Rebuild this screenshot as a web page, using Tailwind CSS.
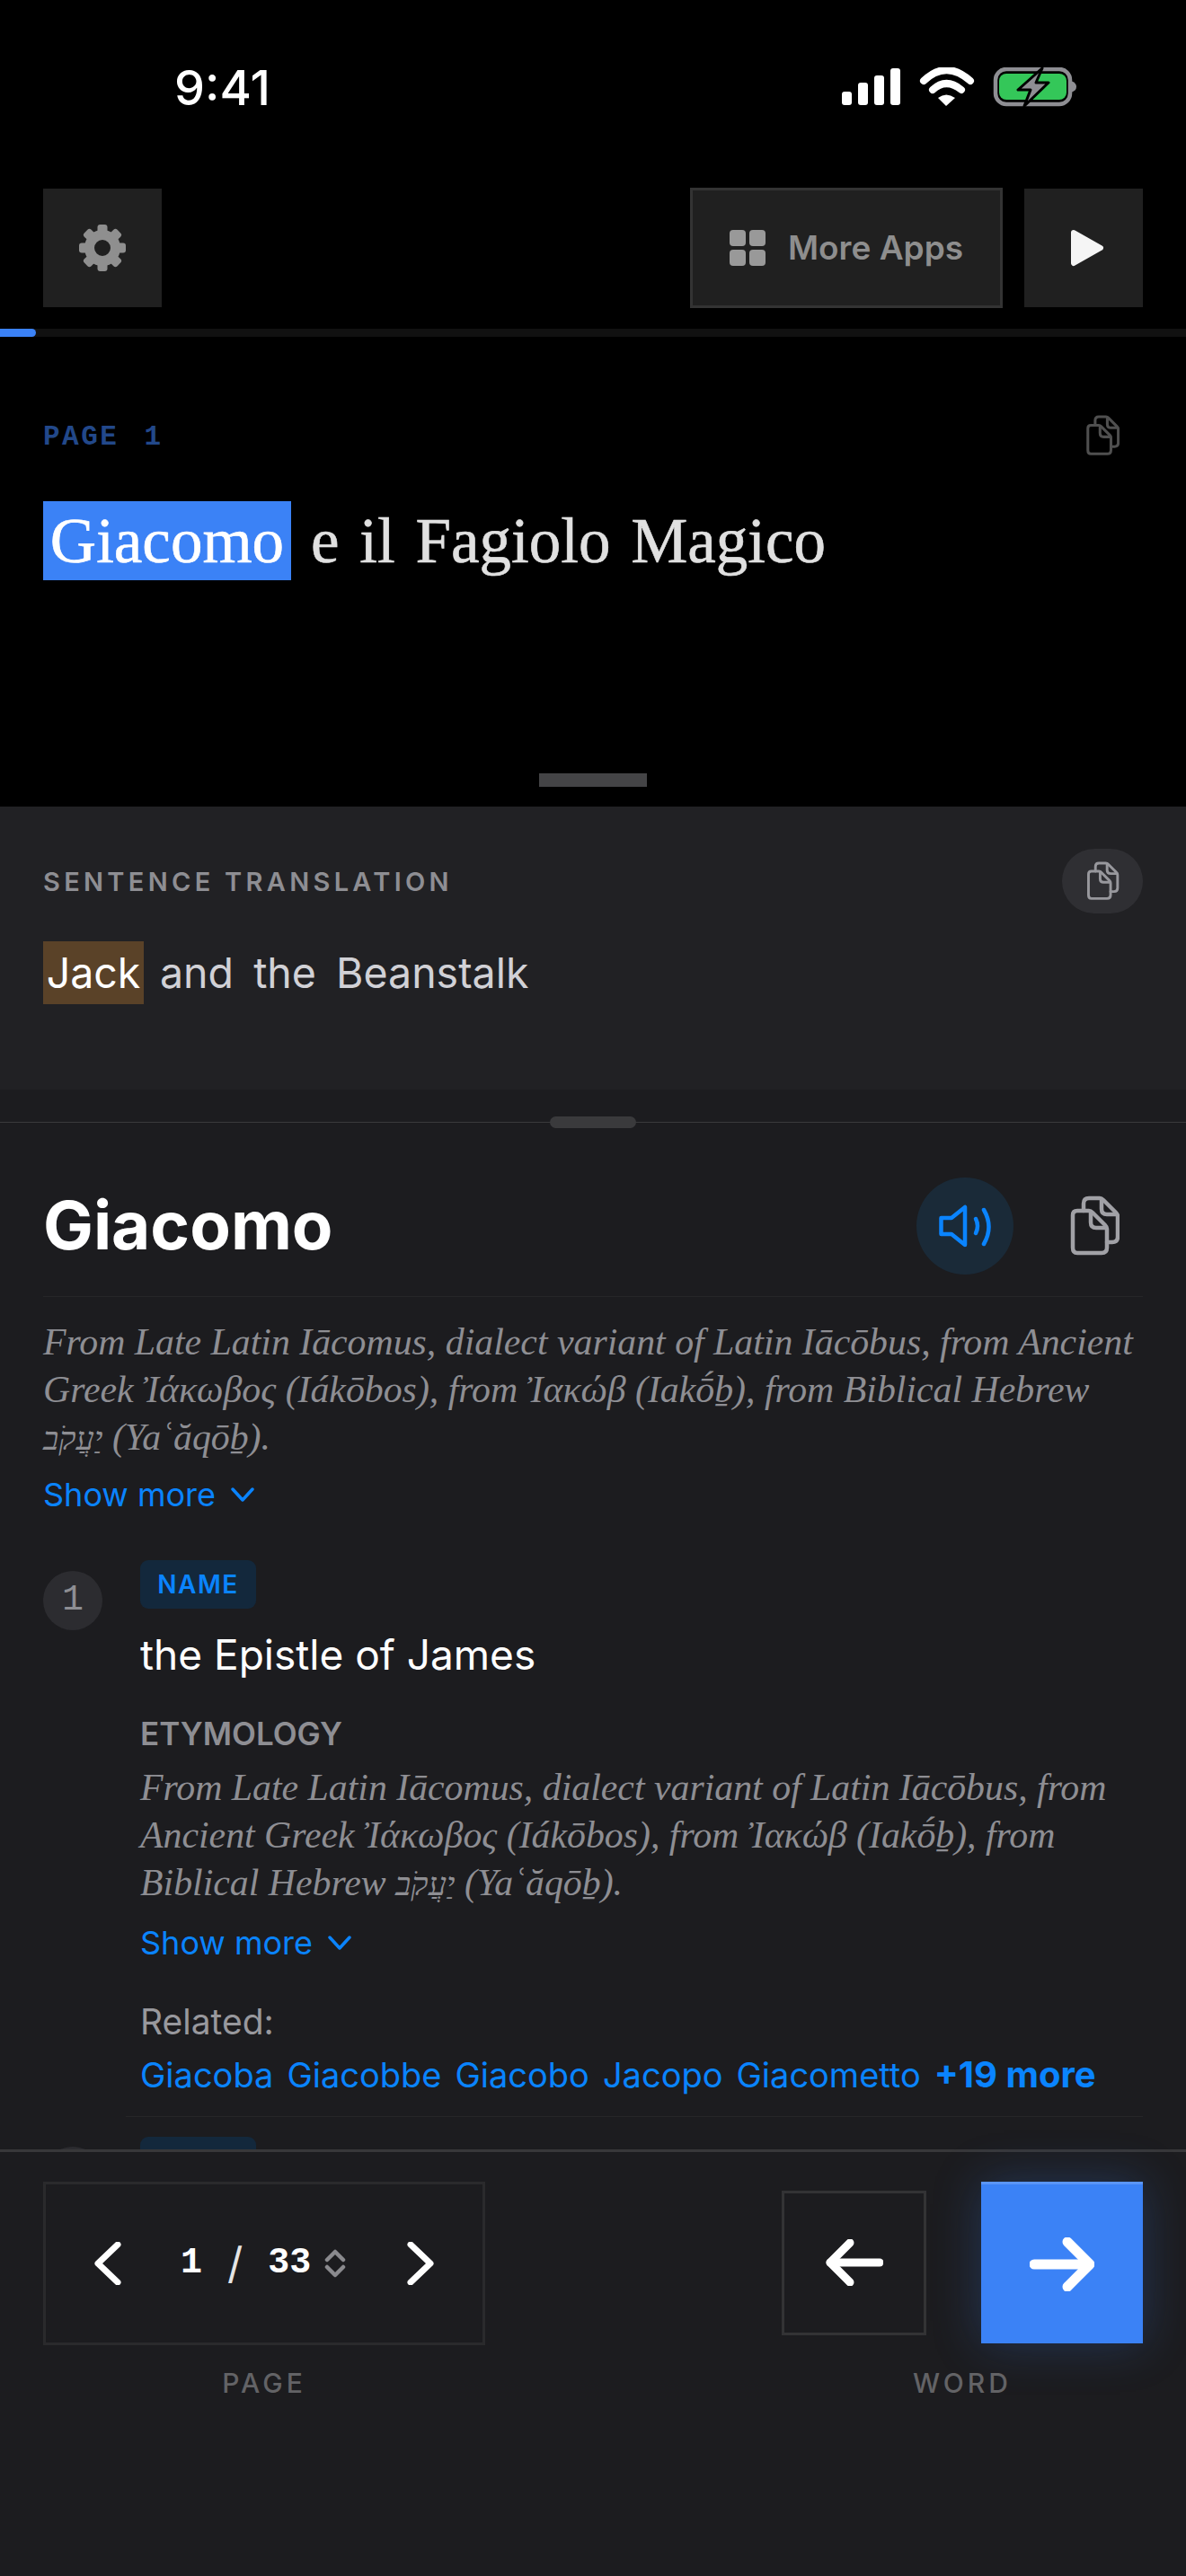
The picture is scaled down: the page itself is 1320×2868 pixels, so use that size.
<!DOCTYPE html>
<html lang="en">

<head>
  <meta charset="UTF-8" />
  <meta name="viewport" content="width=device-width, initial-scale=1.0" />
  <title>Reader</title>
  <script src="https://cdn.jsdelivr.net/npm/@tailwindcss/browser@4"></script>
</head>

<body class="bg-black font-['Inter',sans-serif]">
  <svg class="hidden">
    <symbol id="copy" viewBox="0 0 56 68">
      <g fill="none" stroke="currentColor" stroke-width="4.5" stroke-linecap="round" stroke-linejoin="round">
        <path d="M9 17H22Q24 17 26 19L40 33Q42 35 42 37V58Q42 64 36 64H9Q4 64 4 58V22Q4 17 9 17Z" />
        <path d="M24 18V30Q24 36 30 36H41" />
        <path d="M16 17V9Q16 3 22 3H34Q36 3 38 5L52 19Q54 21 54 23V46Q54 52 48 52H42" />
        <path d="M36 4V15Q36 21 42 21H53" />
      </g>
    </symbol>
  </svg>

  <div class="w-[1320px] h-[2868px] flex flex-col overflow-hidden">

    <!-- Reading pane -->
    <section class="h-[898px] bg-black flex flex-col shrink-0">
      <!-- Status bar -->
      <div class="h-[209px] flex justify-between pl-[194px] pr-[122px] pt-[66px] shrink-0">
        <span class="text-[54px] leading-[64px] font-medium text-white">9:41</span>
        <svg class="w-[261px] h-[44px] mt-[9px]" viewBox="0 0 261 44">
          <rect x="0" y="27" width="11" height="15" rx="3" fill="#fff" />
          <rect x="18" y="17" width="11" height="25" rx="3" fill="#fff" />
          <rect x="36" y="9" width="11" height="33" rx="3" fill="#fff" />
          <rect x="54" y="1" width="11" height="41" rx="3" fill="#fff" />
          <path d="M91 15Q116 -9 143 15" fill="none" stroke="#fff" stroke-width="8" stroke-linecap="round" />
          <path d="M101 25Q116 11 133 25" fill="none" stroke="#fff" stroke-width="8" stroke-linecap="round" />
          <path d="M107 34Q116 27 126 34L116 43Z" fill="#fff" />
          <rect x="171" y="2" width="83" height="39" rx="12" fill="none" stroke="#8e8e93" stroke-width="4.500" />
          <rect x="175" y="7" width="75" height="29" rx="8" fill="#34c759" />
          <path d="M255 15Q261 17 261 21.500Q261 26 255 28Z" fill="#8e8e93" />
          <path d="M223 1L196 25H210L203 43L230 17H216Z" fill="#8e8e93" stroke="#000" stroke-width="3" stroke-linejoin="round" />
        </svg>
      </div>

      <!-- Toolbar -->
      <div class="flex items-center px-[48px] shrink-0">
        <button class="w-[132px] h-[132px] bg-[#202020] flex items-center justify-center">
          <svg class="w-[52px] h-[52px]" viewBox="0 0 52 52" fill="#8f8f8f">
            <circle cx="26" cy="26" r="14.500" fill="none" stroke="#8f8f8f" stroke-width="11" />
            <rect x="20.500" y="0" width="11" height="12" rx="3" />
            <rect x="20.500" y="0" width="11" height="12" rx="3" transform="rotate(45 26 26)" />
            <rect x="20.500" y="0" width="11" height="12" rx="3" transform="rotate(90 26 26)" />
            <rect x="20.500" y="0" width="11" height="12" rx="3" transform="rotate(135 26 26)" />
            <rect x="20.500" y="0" width="11" height="12" rx="3" transform="rotate(180 26 26)" />
            <rect x="20.500" y="0" width="11" height="12" rx="3" transform="rotate(225 26 26)" />
            <rect x="20.500" y="0" width="11" height="12" rx="3" transform="rotate(270 26 26)" />
            <rect x="20.500" y="0" width="11" height="12" rx="3" transform="rotate(315 26 26)" />
          </svg>
        </button>
        <button class="ml-auto w-[348px] h-[134px] bg-[#202020] border-[3px] border-[#333333] flex items-center justify-center gap-[25px]">
          <span class="grid grid-cols-2 gap-[4px]">
            <span class="w-[18px] h-[18px] rounded-[4px] bg-[#999999]"></span>
            <span class="w-[18px] h-[18px] rounded-[4px] bg-[#999999]"></span>
            <span class="w-[18px] h-[18px] rounded-[4px] bg-[#999999]"></span>
            <span class="w-[18px] h-[18px] rounded-[4px] bg-[#999999]"></span>
          </span>
          <span class="text-[37px] font-semibold text-[#8e8e8e]">More Apps</span>
        </button>
        <button class="ml-[24px] w-[132px] h-[132px] bg-[#202020] flex items-center justify-center">
          <svg class="w-[38px] h-[42px] ml-[8px]" viewBox="0 0 38 42">
            <path d="M4 4L34 21L4 38Z" fill="#f5f5f5" stroke="#f5f5f5" stroke-width="6" stroke-linejoin="round" />
          </svg>
        </button>
      </div>

      <!-- Progress -->
      <div class="mt-[23px] h-[9px] bg-[#111111] shrink-0">
        <div class="w-[40px] h-full bg-[#3b82f6] rounded-r-full"></div>
      </div>

      <div class="flex items-start justify-between px-[48px] pt-[87px]">
        <span class="font-['Liberation_Mono',monospace] font-bold text-[31px] leading-[36px] tracking-[2.500px] text-[#22488a] [word-spacing:7px] mt-[7px]">PAGE 1</span>
        <svg class="w-[38px] h-[46px] mr-[26px] text-[#4f4f4f]"><use href="#copy" /></svg>
      </div>

      <p class="mt-[41px] ml-[48px] flex items-center font-['Liberation_Serif',serif] text-[71px] text-[#e0e0e0] [word-spacing:5px] [-webkit-text-stroke:0.6px_#e0e0e0]">
        <span class="bg-[#3b82f6] text-white [-webkit-text-stroke:0.6px_#ffffff] h-[88px] w-[276px] flex items-center justify-center">Giacomo</span>
        <span class="ml-[22px]">e il Fagiolo Magico</span>
      </p>

      <div class="mt-auto mb-[22px] mx-auto w-[120px] h-[15px] bg-[#444446] shrink-0"></div>
    </section>

    <!-- Sentence translation -->
    <section class="h-[315px] bg-[#212124] px-[48px] pt-[47px] shrink-0">
      <div class="flex items-center justify-between">
        <span class="mt-[2px] text-[29px] font-semibold tracking-[4.300px] text-[#8e8e93]">SENTENCE TRANSLATION</span>
        <span class="w-[90px] h-[72px] rounded-full bg-[#2f2f33] flex items-center justify-center">
          <svg class="w-[38px] h-[44px] text-[#98989d]"><use href="#copy" /></svg>
        </span>
      </div>
      <p class="mt-[30px] flex items-center text-[46.500px] text-[#d1d1d6] [word-spacing:9px]">
        <span class="w-[112px] h-[70px] bg-[#5a4228] text-white flex items-center justify-center pt-[2px]">Jack</span>
        <span class="ml-[18px] pt-[2px]">and the Beanstalk</span>
      </p>
    </section>

    <div class="h-[36px] bg-[#1c1c1f] shrink-0"></div>

    <!-- Word sheet -->
    <main class="relative flex-1 min-h-0 bg-[#1c1c1f] border-t-[1.500px] border-[#3a3a3c]">
      <div class="absolute left-[612px] top-[-7px] w-[96px] h-[13px] rounded-full bg-[#3a3a3c]"></div>
      <div class="h-full overflow-hidden px-[48px] pt-[60px]">
        <div class="flex items-center h-[109px]">
          <h1 class="text-[74.500px] font-bold text-white">Giacomo</h1>
          <span class="ml-auto w-[108px] h-[108px] rounded-full bg-[#1a2a38] flex items-center justify-center">
            <svg class="w-[58px] h-[48px]" viewBox="0 0 58 48" fill="none" stroke="#0a84ff" stroke-width="4.500" stroke-linecap="round" stroke-linejoin="round">
              <path d="M2.500 15H14L29 3V45L14 33H2.500Z" />
              <path d="M41 16Q45 24 41 32" />
              <path d="M50 6Q61 25 50 44" />
            </svg>
          </span>
          <svg class="w-[56px] h-[68px] ml-[62px] mr-[26px] text-[#a1a1a6]"><use href="#copy" /></svg>
        </div>

        <div class="mt-[24px] border-t-[1.500px] border-[#262628] pt-[24px]">
          <p class="font-['Liberation_Serif',serif] italic text-[41.800px] leading-[53px] text-[#8e8e93]">From Late Latin Iācomus, dialect variant of Latin Iācōbus, from Ancient Greek Ἰάκωβος (Iákōbos), from Ἰακώβ (Iakṓḇ), from Biblical Hebrew <span class="text-[36px]">יַעֲקֹב</span> (Yaʿăqōḇ).</p>
          <button class="mt-[13px] flex items-center gap-[17px] text-[36px] leading-[44px] text-[#0a84ff]">
            Show more
            <svg class="w-[26px] h-[16px]" viewBox="0 0 26 16" fill="none" stroke="#0a84ff" stroke-width="3.500" stroke-linecap="round" stroke-linejoin="round"><path d="M2 2L13 14L24 2" /></svg>
          </button>
        </div>

        <!-- Definition 1 -->
        <div class="mt-[51px] flex gap-[42px]">
          <span class="mt-[12px] w-[66px] h-[66px] rounded-full bg-[#2c2c30] flex items-center justify-center font-['Liberation_Mono',monospace] text-[40px] text-[#8e8e93] shrink-0">1</span>
          <div class="flex-1 min-w-0">
            <span class="block w-[129px] h-[54px] rounded-[9px] bg-[#13283c] text-center text-[28px] leading-[54px] font-semibold tracking-[1.500px] text-[#0a84ff]">NAME</span>
            <p class="mt-[19px] text-[46px] leading-[64px] text-white">the Epistle of James</p>
            <p class="mt-[36px] text-[35px] leading-[40px] font-semibold text-[#8e8e93]">ETYMOLOGY</p>
            <p class="mt-[14px] font-['Liberation_Serif',serif] italic text-[41.800px] leading-[53px] text-[#8e8e93]">From Late Latin Iācomus, dialect variant of Latin Iācōbus, from Ancient Greek Ἰάκωβος (Iákōbos), from Ἰακώβ (Iakṓḇ), from Biblical Hebrew <span class="text-[36px]">יַעֲקֹב</span> (Yaʿăqōḇ).</p>
            <button class="mt-[16px] flex items-center gap-[17px] text-[36px] leading-[44px] text-[#0a84ff]">
              Show more
              <svg class="w-[26px] h-[16px]" viewBox="0 0 26 16" fill="none" stroke="#0a84ff" stroke-width="3.500" stroke-linecap="round" stroke-linejoin="round"><path d="M2 2L13 14L24 2" /></svg>
            </button>
            <p class="mt-[44px] text-[39px] leading-[44px] text-[#98989d]">Related:</p>
            <p class="mt-[14px] flex items-baseline gap-[15px] text-[38px] leading-[46px] text-[#0a84ff] whitespace-nowrap">
              <a>Giacoba</a><a>Giacobbe</a><a>Giacobo</a><a>Jacopo</a><a>Giacometto</a><a class="text-[40px] font-bold">+19 more</a>
            </p>
          </div>
        </div>

        <!-- Definition 2, cut off by the bottom bar -->
        <div class="relative ml-[92px] mt-[23px] border-t-[1.500px] border-[#262628] pt-[22px] flex">
          <span class="absolute left-[-92px] top-[33px] w-[66px] h-[66px] rounded-full bg-[#2c2c30]"></span>
          <span class="w-[129px] h-[54px] ml-[16px] rounded-[9px] bg-[#13283c]"></span>
        </div>
      </div>
    </main>

    <!-- Bottom controls -->
    <footer class="relative h-[475px] bg-[#1c1c1f] border-t-[3px] border-[#38383a] px-[48px] pt-[33px] shrink-0">
      <div class="flex items-start justify-between">
        <div class="flex flex-col items-center">
          <div class="w-[492px] h-[182px] border-[3px] border-[#2a2a2c] flex items-center pl-[54px] pr-[54px]">
            <svg class="w-[30px] h-[48px]" viewBox="0 0 30 48" fill="none" stroke="#fff" stroke-width="7" stroke-linecap="round" stroke-linejoin="round"><path d="M26 3L4 24L26 45" /></svg>
            <span class="ml-[66px] w-[24px] font-['Liberation_Mono',monospace] font-bold text-[40px] text-white">1</span>
            <span class="ml-[28px] text-[48px] text-[#e5e5e5]">/</span>
            <span class="ml-[28px] font-['Liberation_Mono',monospace] font-bold text-[40px] text-white">33</span>
            <svg class="w-[24px] h-[32px] ml-[15px]" viewBox="0 0 24 32" fill="none" stroke="#8a8a8e" stroke-width="4.500" stroke-linecap="round" stroke-linejoin="round"><path d="M3 12L12 3L21 12" /><path d="M3 20L12 29L21 20" /></svg>
            <svg class="ml-auto w-[30px] h-[48px]" viewBox="0 0 30 48" fill="none" stroke="#fff" stroke-width="7" stroke-linecap="round" stroke-linejoin="round"><path d="M4 3L26 24L4 45" /></svg>
          </div>
          <span class="mt-[24px] text-[30px] leading-[36px] font-medium tracking-[4px] text-[#636366]">PAGE</span>
        </div>

        <div class="flex flex-col items-center w-[402px]">
          <div class="flex items-center gap-[61px]">
            <button class="w-[161px] h-[161px] border-[3px] border-[#333335] flex items-center justify-center">
              <svg class="w-[64px] h-[52px]" viewBox="0 0 64 52" fill="none" stroke="#fff" stroke-width="9" stroke-linecap="round" stroke-linejoin="round"><path d="M27 4L5 26L27 48" /><path d="M5 26H60" /></svg>
            </button>
            <button class="w-[180px] h-[180px] bg-[#3b82f6] border-t-[3px] border-[#5a96f8] shadow-[0_0_50px_rgba(59,130,246,0.25)] flex items-center justify-center">
              <svg class="w-[72px] h-[60px]" viewBox="0 0 72 60" fill="none" stroke="#fff" stroke-width="11" stroke-linecap="round" stroke-linejoin="round"><path d="M42 5L67 30L42 55" /><path d="M5 30H65" /></svg>
            </button>
          </div>
          <span class="mt-[26px] text-[30px] leading-[36px] font-medium tracking-[4px] text-[#636366]">WORD</span>
        </div>
      </div>
    </footer>
  </div>
</body>

</html>
